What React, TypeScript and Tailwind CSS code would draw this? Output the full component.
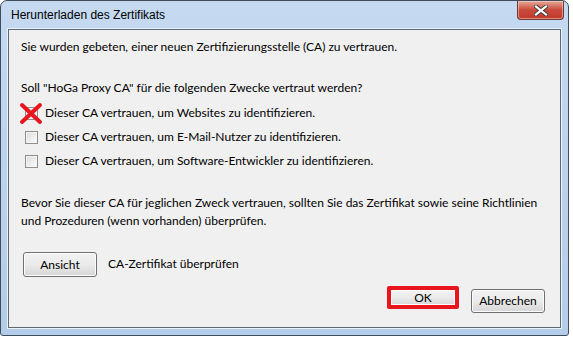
import React from "react";

const titleFont = { fontFamily: '"Liberation Sans", Arial, sans-serif' };
const bodyFont = { fontFamily: 'Lato, "Liberation Sans", sans-serif' };

function WinButton({ label, className = "" }: { label: string; className?: string }) {
  return (
    <div
      className={`flex items-center justify-center rounded-[3px] border border-[#707070] bg-gradient-to-b from-[#f2f2f2] via-[#ebebeb] to-[#d6d6d6] text-[12px] text-black shadow-[inset_0_0_0_1px_#fcfcfc] ${className}`}
    >
      {label}
    </div>
  );
}

function CheckRow({ label, marked }: { label: string; marked?: boolean }) {
  return (
    <div className="relative flex h-[24px] items-center">
      <div className="ml-[4px] h-[13px] w-[13px] border border-[#8f8f8f] bg-gradient-to-br from-[#dcdcdc] to-[#fbfbfb] shadow-[inset_0_0_0_1px_#f4f4f4]" />
      <span className="ml-[7px]">{label}</span>
      {marked && (
        <svg className="absolute left-[-2px] top-[1px]" width="24" height="23" viewBox="0 0 24 23">
          <path d="M3 3 L21 20 M21 3 L3 20" stroke="#e8141e" strokeWidth="4" strokeLinecap="round" />
        </svg>
      )}
    </div>
  );
}

export default function App() {
  return (
    <div className="h-[337px] w-[573px] bg-white" style={bodyFont}>
      <div className="flex h-[336px] w-[569px] flex-col rounded-t-[7px] rounded-b-[3px] border border-[#3f4c5b] bg-gradient-to-b from-[#c5daf1] via-[#bcd3ec] to-[#b3cce8]">
        {/* title bar */}
        <div className="flex h-[28px] shrink-0 items-start justify-between">
          <div className="pl-[10px] pt-[6px] text-[12px] leading-[16px] text-black" style={titleFont}>
            Herunterladen des Zertifikats
          </div>
          <div className="mr-[4px] flex h-[19px] w-[47px] items-center justify-center rounded-b-[4px] border border-t-0 border-[#6e3a36] bg-gradient-to-b from-[#e5a899] via-[#c8493c] to-[#c23a2c] shadow-[inset_0_0_0_1px_rgba(255,220,210,0.5)]">
            <svg width="14" height="11" viewBox="0 0 14 11">
              <path d="M2 1.5 L12 9.5 M12 1.5 L2 9.5" stroke="#3c3c3c" strokeWidth="4" strokeLinecap="square" />
              <path d="M2 1.5 L12 9.5 M12 1.5 L2 9.5" stroke="#ffffff" strokeWidth="2.2" strokeLinecap="square" />
            </svg>
          </div>
        </div>

        {/* client area */}
        <div className="mx-[7px] mb-[7px] flex flex-1 flex-col whitespace-nowrap border border-[#5f6873] bg-[#f0f0f0] pl-[12px] pr-[15px] pt-[8px] text-[12px] leading-[18px] text-black shadow-[0_0_0_1px_#eaf2fb]">
          <p>Sie wurden gebeten, einer neuen Zertifizierungsstelle (CA) zu vertrauen.</p>
          <p className="mt-[23px]">Soll "HoGa Proxy CA" für die folgenden Zwecke vertraut werden?</p>
          <div className="mt-[4px] flex flex-col">
            <CheckRow label="Dieser CA vertrauen, um Websites zu identifizieren." marked />
            <CheckRow label="Dieser CA vertrauen, um E-Mail-Nutzer zu identifizieren." />
            <CheckRow label="Dieser CA vertrauen, um Software-Entwickler zu identifizieren." />
          </div>
          <p className="mt-[21px]">
            Bevor Sie dieser CA für jeglichen Zweck vertrauen, sollten Sie das Zertifikat sowie seine Richtlinien
            <br />
            und Prozeduren (wenn vorhanden) überprüfen.
          </p>
          <div className="mt-[22px] flex items-center">
            <WinButton label="Ansicht" className="ml-[2px] h-[25px] w-[74px]" />
            <span className="ml-[11px] -mt-[2px]">CA-Zertifikat überprüfen</span>
          </div>
          <div className="mt-[9px] flex items-start justify-end">
            <div className="rounded-[2px] border-[4px] border-[#e8141e]">
              <WinButton label="OK" className="h-[15px] w-[64px] rounded-none border-0" />
            </div>
            <WinButton label="Abbrechen" className="ml-[12px] mt-[3px] h-[24px] w-[74px]" />
          </div>
        </div>
      </div>
    </div>
  );
}
